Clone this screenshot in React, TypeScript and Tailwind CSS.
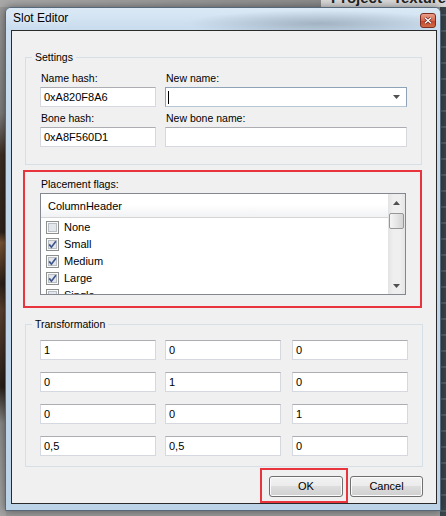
import React from "react";

const font = "font-['Liberation_Sans',Arial,sans-serif]";

function TextBox({ value, className = "" }: { value?: string; className?: string }) {
  return (
    <div
      className={`flex h-[20px] w-[116px] items-center border border-[#d5d8de] border-t-[#abadb3] bg-white pl-[3px] text-[11px] text-black ${className}`}
    >
      {value}
    </div>
  );
}

function Check({ on }: { on: boolean }) {
  return (
    <svg width="13" height="13" viewBox="0 0 13 13" className="shrink-0">
      <rect x="0.5" y="0.5" width="12" height="12" fill="#fafafa" stroke="#8e8f8f" />
      <rect x="2.5" y="2.5" width="8" height="8" fill="#e3e6ea" stroke="#b9bec5" />
      {on && (
        <path d="M3.2 6.4 L5.4 9.2 L9.9 3.2" stroke="#3f558c" strokeWidth="1.7" fill="none" />
      )}
    </svg>
  );
}

function Arrow({ down }: { down?: boolean }) {
  return (
    <svg width="7" height="4" viewBox="0 0 7 4">
      <path d={down ? "M0 0 L7 0 L3.5 4Z" : "M0 4 L3.5 0 L7 4Z"} fill="#505050" />
    </svg>
  );
}

function Button({ label }: { label: string }) {
  return (
    <div className="flex h-[21px] items-center justify-center rounded-[3px] border border-[#707070] bg-[linear-gradient(180deg,#f2f2f2_0%,#ebebeb_50%,#dddddd_50%,#cfcfcf_100%)] text-[11px] text-black shadow-[inset_0_0_0_1px_#fbfbfb]">
      {label}
    </div>
  );
}

const flags = [
  { name: "None", on: false },
  { name: "Small", on: true },
  { name: "Medium", on: true },
  { name: "Large", on: true },
  { name: "Single", on: false },
];

const matrix = [
  ["1", "0", "0"],
  ["0", "1", "0"],
  ["0", "0", "1"],
  ["0,5", "0,5", "0"],
];

export default function App() {
  return (
    <div className={`relative h-[516px] w-[446px] overflow-hidden bg-[#9a9a9a] ${font}`}>
      {/* desktop behind the dialog */}
      <div className="absolute left-0 top-0 h-full w-[6px] bg-[linear-gradient(180deg,#9a9a9a_0%,#7d7d7d_22%,#3d2e24_30%,#2f241d_45%,#7a5535_47%,#2c221b_55%,#5a4130_60%,#2a201a_75%,#8a8a8a_82%,#a5a5a5_100%)]" />
      <div className="absolute right-0 top-0 h-full w-[6px] bg-[repeating-linear-gradient(180deg,#3a464c_0px,#3a464c_14px,#6a7a80_15px,#3a464c_16px)]" />
      <div className="absolute left-0 top-0 h-[7px] w-full bg-[linear-gradient(90deg,#a8a8a8_0%,#8c8c8c_70%,#707070_100%)]" />
      <div className="absolute left-[321px] top-0 flex h-[7px] w-[125px] overflow-hidden bg-[#d9d9d9]">
        <div className="h-full w-[3px] bg-[#6f8f3a]" />
        <div className="-mt-[10px] ml-[10px] text-[15px] font-bold leading-[16px] text-[#222]">Project</div>
        <div className="ml-[6px] h-full w-[1px] bg-[#888]" />
        <div className="-mt-[10px] ml-[5px] text-[15px] font-bold leading-[16px] text-[#222]">Texture</div>
      </div>

      {/* dialog window */}
      <div className="absolute left-[5px] top-[7px] flex h-[504px] w-[436px] flex-col rounded-t-[6px] border border-[#56687a] bg-[linear-gradient(180deg,#cfe1f1_0%,#c3d8eb_30%,#bcd2e7_100%)] shadow-[0_0_8px_rgba(0,0,0,0.45)]">
        <div className="flex h-[22px] items-start rounded-t-[5px] bg-[radial-gradient(ellipse_30%_60%_at_72%_70%,rgba(80,95,110,0.35),transparent),linear-gradient(180deg,#dbe9f5_0%,#c8dcee_100%)]">
          <div className="mt-[3px] pl-[7px] text-[12px] leading-[15px] text-black [text-shadow:0_0_6px_#ffffff]">
            Slot Editor
          </div>
          <div className="ml-auto mr-[4px] mt-[5px] flex h-[15px] w-[16px] items-center justify-center rounded-[3px] border border-[#7b2f22] bg-[linear-gradient(180deg,#e9a08a_0%,#d8664c_50%,#c0432b_51%,#d26a45_100%)]">
            <svg width="8" height="7" viewBox="0 0 8 7">
              <path d="M1 0.8 L7 6.2 M7 0.8 L1 6.2" stroke="#5a1d12" strokeWidth="2.6" />
              <path d="M1 0.8 L7 6.2 M7 0.8 L1 6.2" stroke="#ffffff" strokeWidth="1.4" />
            </svg>
          </div>
        </div>

        {/* client area */}
        <div className="ml-[5px] flex h-[474px] w-[426px] flex-col border border-[#2a2a2a] bg-[#f0f0f0] text-[10.5px] text-black">
          <fieldset className="ml-[13px] mt-[20px] w-[397px] border border-[#d5dfe5] p-0">
            <legend className="ml-[6px] px-[3px] leading-[13px]">Settings</legend>
            <div className="flex px-[14px] pb-[17px] pt-[8px]">
              <div className="flex w-[116px] flex-col">
                <div className="mb-[2px] ml-[1px] leading-[13px]">Name hash:</div>
                <TextBox value="0xA820F8A6" />
                <div className="mb-[2px] ml-[1px] mt-[5px] leading-[13px]">Bone hash:</div>
                <TextBox value="0xA8F560D1" />
              </div>
              <div className="ml-[9px] flex w-[242px] flex-col">
                <div className="mb-[2px] ml-[1px] leading-[13px]">New name:</div>
                <div className="flex h-[20px] items-center border border-[#8fa3b8] border-b-[#b7c6d4] bg-white">
                  <div className="ml-[2px] h-[13px] w-[1px] bg-black" />
                  <div className="ml-auto mr-[6px] flex">
                    <Arrow down />
                  </div>
                </div>
                <div className="mb-[2px] ml-[1px] mt-[5px] leading-[13px]">New bone name:</div>
                <TextBox className="w-[242px]" />
              </div>
            </div>
          </fieldset>

          <div className="ml-[11px] mt-[5px] h-[138px] w-[399px] border-2 border-[#e8343c] pl-[15px] pt-[6px]">
            <div className="mb-[2px] ml-[1px] leading-[13px]">Placement flags:</div>
            <div className="flex h-[102px] w-[366px] border border-[#828790] bg-white">
              <div className="flex flex-1 flex-col overflow-hidden">
                <div className="flex h-[24px] shrink-0 items-center border-b border-[#d5d5d5] bg-[linear-gradient(180deg,#ffffff_0%,#ffffff_45%,#f1f2f4_100%)] pl-[7px] pt-[1px] text-[11px]">
                  ColumnHeader
                </div>
                <div className="pt-[1px]">
                  {flags.map((f) => (
                    <div key={f.name} className="flex h-[17px] items-center pl-[5px]">
                      <Check on={f.on} />
                      <span className="ml-[5px] text-[11px]">{f.name}</span>
                    </div>
                  ))}
                </div>
              </div>
              <div className="flex w-[17px] flex-col bg-[linear-gradient(90deg,#e3e3e3_0%,#efefef_30%,#efefef_70%,#e5e5e5_100%)]">
                <div className="flex h-[17px] items-center justify-center">
                  <Arrow />
                </div>
                <div className="mx-[1px] mt-[2px] h-[16px] rounded-[2px] border border-[#979797] bg-[linear-gradient(90deg,#f5f5f5_0%,#e6e6e6_50%,#d4d4d4_100%)]" />
                <div className="flex-1" />
                <div className="flex h-[17px] items-center justify-center">
                  <Arrow down />
                </div>
              </div>
            </div>
          </div>

          <fieldset className="ml-[13px] mt-[10px] w-[397px] border border-[#d5dfe5] p-0">
            <legend className="ml-[6px] px-[3px] leading-[13px]">Transformation</legend>
            <div className="flex flex-col gap-[12px] px-[14px] pb-[10px] pt-[9px]">
              {matrix.map((row, i) => (
                <div key={i} className="flex">
                  <TextBox value={row[0]} />
                  <TextBox value={row[1]} className="ml-[9px]" />
                  <TextBox value={row[2]} className="ml-[11px]" />
                </div>
              ))}
            </div>
          </fieldset>

          <div className="ml-[248px] mt-[1px] flex items-start">
            <div className="h-[35px] w-[88px] border-2 border-[#e8343c] pl-[7px] pt-[6px]">
              <div className="w-[74px]">
                <Button label="OK" />
              </div>
            </div>
            <div className="ml-[2px] mt-[8px] w-[73px]">
              <Button label="Cancel" />
            </div>
          </div>
        </div>
      </div>
    </div>
  );
}
